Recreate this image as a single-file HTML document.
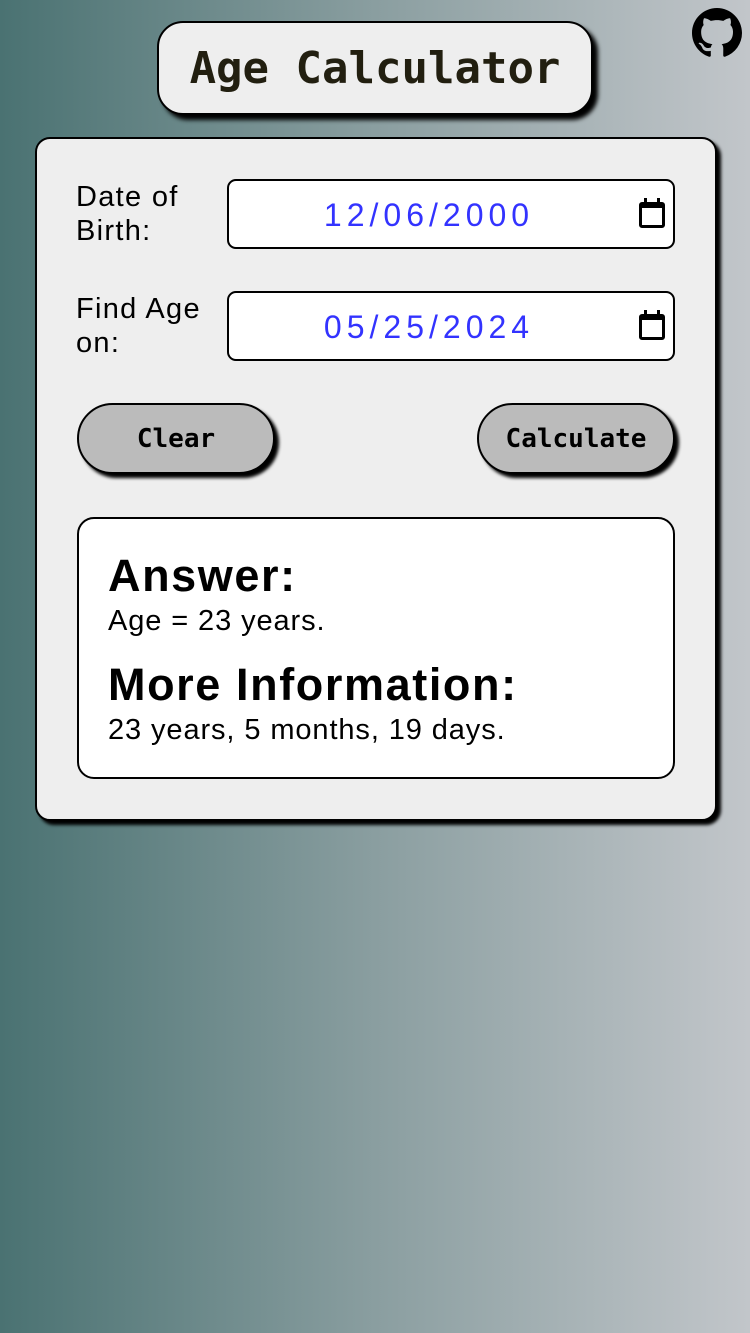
<!DOCTYPE html>
<html><head><style>
*{margin:0;padding:0;box-sizing:border-box}
body{width:750px;height:1333px;overflow:hidden;background:linear-gradient(90deg,#4a7272 0%,#8a9ea0 50%,#c2c6ca 100%);font-family:"Liberation Sans",sans-serif;position:relative;color:#000}
.abs{position:absolute}
.title{left:157px;top:21px;width:436px;height:94px;background:#eee;border:2px solid #000;border-radius:26px;box-shadow:5px 5px 4px #000;font-family:"DejaVu Sans Mono","Liberation Mono",monospace;font-weight:bold;font-size:44px;color:#221f10;text-align:center;line-height:92px}
.card{left:35px;top:137px;width:682px;height:684px;background:#eee;border:2px solid #000;border-radius:15px;box-shadow:4px 4px 3px #000}
.lbl{font-size:29px;line-height:34px;left:76px;letter-spacing:1.3px}
.inp{left:227px;width:448px;height:70px;background:#fff;border:2px solid #000;border-radius:9px;color:#3333ff;font-size:32px;letter-spacing:5px;text-align:center;line-height:68px;padding-right:44px}
.cal{position:absolute;right:8px;top:21px;width:26px;height:26px;border:3px solid #000;border-top-width:6px;border-radius:3px}
.cal:before,.cal:after{content:"";position:absolute;top:-10px;width:3px;height:6px;background:#000}
.cal:before{left:2px}.cal:after{right:2px}
.btn{top:403px;width:198px;height:71px;background:#bbb;border:2px solid #000;border-radius:36px;box-shadow:4px 4px 3px #000;font-family:"DejaVu Sans Mono","Liberation Mono",monospace;font-weight:bold;font-size:26px;text-align:center;line-height:68px}
.ans{left:77px;top:517px;width:598px;height:262px;background:#fff;border:2px solid #000;border-radius:17px}
h2{position:absolute;left:108px;font-size:45px;font-weight:bold;line-height:50px;letter-spacing:1.6px}
p{position:absolute;left:108px;font-size:29px;line-height:34px;letter-spacing:0.9px}
</style></head><body>
<div class="abs title">Age Calculator</div>
<svg class="abs" style="left:692px;top:8px" width="50" height="50" viewBox="0 0 16 16"><path fill="#000" d="M8 0C3.58 0 0 3.58 0 8c0 3.540 2.290 6.530 5.470 7.590.4.07.55-.17.55-.38 0-.19-.01-.82-.01-1.490-2.010.37-2.530-.49-2.690-.94-.09-.23-.48-.94-.82-1.130-.28-.15-.68-.52-.01-.53.63-.01 1.080.58 1.230.82.72 1.210 1.870.87 2.330.66.07-.52.28-.87.51-1.070-1.780-.2-3.640-.89-3.640-3.950 0-.87.31-1.590.82-2.150-.08-.2-.36-1.020.08-2.120 0 0 .67-.21 2.200.82.64-.18 1.320-.27 2-.27.68 0 1.360.09 2 .27 1.530-1.040 2.200-.82 2.200-.82.44 1.100.16 1.920.08 2.120.51.56.82 1.270.82 2.150 0 3.070-1.870 3.750-3.650 3.950.29.25.54.73.54 1.480 0 1.070-.01 1.930-.01 2.200 0 .21.15.46.55.38A8.013 8.013 0 0016 8c0-4.420-3.580-8-8-8z"/></svg>
<div class="abs card"></div>
<div class="abs lbl" style="top:180px">Date of<br>Birth:</div>
<div class="abs inp" style="top:179px">12/06/2000<span class="cal"></span></div>
<div class="abs lbl" style="top:292px">Find Age<br>on:</div>
<div class="abs inp" style="top:291px">05/25/2024<span class="cal"></span></div>
<div class="abs btn" style="left:77px">Clear</div>
<div class="abs btn" style="left:477px">Calculate</div>
<div class="abs ans"></div>
<h2 style="top:551px">Answer:</h2>
<p style="top:604px">Age = 23 years.</p>
<h2 style="top:660px">More Information:</h2>
<p style="top:713px">23 years, 5 months, 19 days.</p>
</body></html>
